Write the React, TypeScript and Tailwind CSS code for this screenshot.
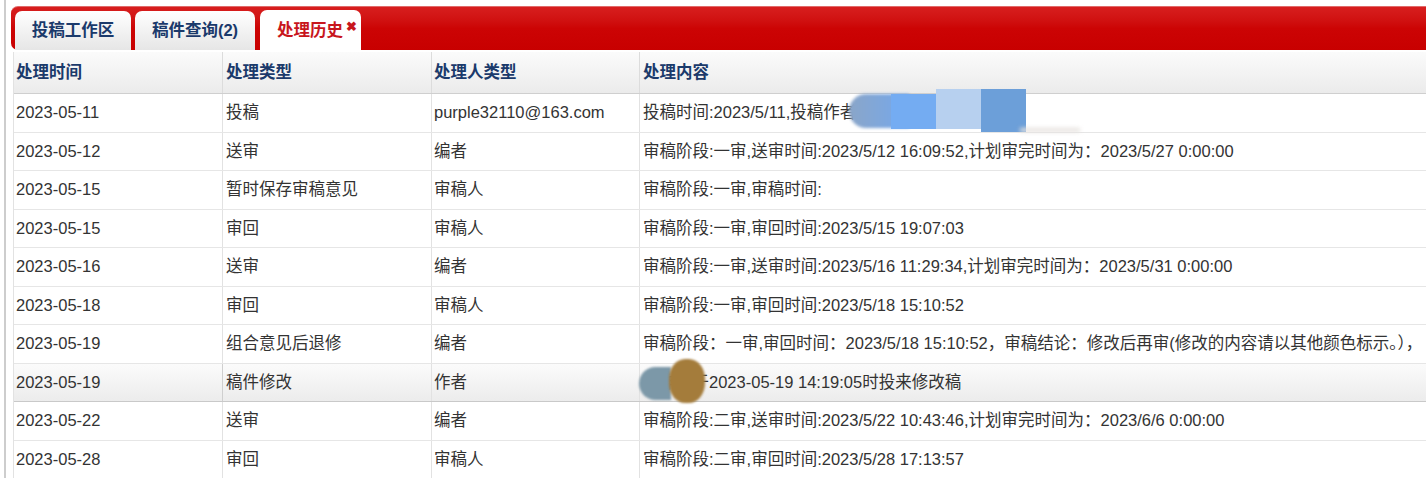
import React from "react";

const rows: [string, string, string, string][] = [
  ["2023-05-11", "投稿", "purple32110@163.com", "投稿时间:2023/5/11,投稿作者"],
  ["2023-05-12", "送审", "编者", "审稿阶段:一审,送审时间:2023/5/12 16:09:52,计划审完时间为：2023/5/27 0:00:00"],
  ["2023-05-15", "暂时保存审稿意见", "审稿人", "审稿阶段:一审,审稿时间:"],
  ["2023-05-15", "审回", "审稿人", "审稿阶段:一审,审回时间:2023/5/15 19:07:03"],
  ["2023-05-16", "送审", "编者", "审稿阶段:一审,送审时间:2023/5/16 11:29:34,计划审完时间为：2023/5/31 0:00:00"],
  ["2023-05-18", "审回", "审稿人", "审稿阶段:一审,审回时间:2023/5/18 15:10:52"],
  ["2023-05-19", "组合意见后退修", "编者", "审稿阶段：一审,审回时间：2023/5/18 15:10:52，审稿结论：修改后再审(修改的内容请以其他颜色标示。），"],
  ["2023-05-19", "稿件修改", "作者", "某作者于2023-05-19 14:19:05时投来修改稿"],
  ["2023-05-22", "送审", "编者", "审稿阶段:二审,送审时间:2023/5/22 10:43:46,计划审完时间为：2023/6/6 0:00:00"],
  ["2023-05-28", "审回", "审稿人", "审稿阶段:二审,审回时间:2023/5/28 17:13:57"],
];

const cols = "grid grid-cols-[208px_209px_208px_1fr]";

export default function App() {
  return (
    <div
      className="flex w-[1426px] h-[478px] overflow-hidden bg-white text-[16.5px] text-[#333]"
      style={{ fontFamily: '"Liberation Sans", "Noto Sans CJK SC", sans-serif' }}
    >
      <div className="w-[4px] shrink-0" />
      <div className="flex-1 min-w-0 border-l-2 border-[#cdcdcd] pt-[6px]">
        {/* tab bar */}
        <div className="ml-[5px] h-[44px] rounded-l-[7px] bg-gradient-to-b from-[#d71e1e] via-[#cc0404] to-[#c80000] border-t border-[#e06a6a] flex items-end pl-[4px] gap-[4px]">
          <div className="w-[116px] h-[39px] rounded-t-[7px] bg-gradient-to-b from-[#ffffff] to-[#e6e6e6] flex items-center justify-center font-bold text-[#1b3a6b]">
            投稿工作区
          </div>
          <div className="w-[120px] h-[39px] rounded-t-[7px] bg-gradient-to-b from-[#ffffff] to-[#e6e6e6] flex items-center justify-center font-bold text-[#1b3a6b]">
            稿件查询(2)
          </div>
          <div className="ml-[1px] w-[101px] h-[40px] rounded-t-[7px] bg-white flex items-center pl-[17px] font-bold text-[#c8161d]">
            <span>处理历史</span>
            <span className="self-start mt-[10px] ml-[3px] text-[13px] leading-none">✖</span>
          </div>
        </div>

        {/* table */}
        <div className="ml-[7px] mt-[2px] border-l border-[#e2e2e2]">
          <div className={`${cols} h-[42px] bg-gradient-to-b from-[#fbfbfb] to-[#ebebeb] border-b border-[#cfcfcf] font-bold text-[#1b3a6b]`}>
            <div className="flex items-center pl-[2px]">处理时间</div>
            <div className="flex items-center pl-[3px] border-l border-[#dcdcdc]">处理类型</div>
            <div className="flex items-center pl-[2px] border-l border-[#dcdcdc]">处理人类型</div>
            <div className="flex items-center pl-[3px] border-l border-[#dcdcdc]">处理内容</div>
          </div>
          {rows.map((r, i) => {
            const hl = i === 7;
            return (
              <div
                key={i}
                className={`${cols} h-[38.5px] border-b ${
                  hl
                    ? "bg-gradient-to-b from-[#fbfbfb] to-[#ececec] border-[#c9c9c9]"
                    : "bg-white border-[#e6e6e6]"
                }`}
              >
                <div className="flex items-center pl-[2px] whitespace-nowrap">{r[0]}</div>
                <div className={`flex items-center pl-[3px] border-l whitespace-nowrap ${hl ? "border-[#cfcfcf]" : "border-[#e2e2e2]"}`}>{r[1]}</div>
                <div className="flex items-center pl-[2px] border-l border-[#e2e2e2] whitespace-nowrap">{r[2]}</div>
                <div className="relative flex items-center pl-[3px] border-l border-[#e2e2e2] whitespace-nowrap">
                  {r[3]}
                  {i === 0 && (
                    <>
                      <div className="absolute left-[209px] top-[0px] w-[60px] h-[34px] rounded-l-full bg-gradient-to-r from-[#8aa5c8] to-[#74a8ec] blur-[1.5px]" />
                      <div className="absolute left-[251px] top-[0px] w-[46px] h-[35px] bg-[#74acf2]" />
                      <div className="absolute left-[296px] top-[-5px] w-[45px] h-[40px] bg-[#b7d0ef]" />
                      <div className="absolute left-[341px] top-[-5px] w-[45px] h-[43px] bg-[#6c9fd9]" />
                      <div className="absolute left-[380px] top-[34px] w-[60px] h-[4px] bg-[#e6e2de] blur-[2px]" />
                    </>
                  )}
                  {i === 7 && (
                    <>
                      <div className="absolute left-[-1px] top-[3px] w-[32px] h-[33px] rounded-l-full bg-[#7c98a8] blur-[1px]" />
                      <div className="absolute left-[29px] top-[-5px] w-[36px] h-[44px] rounded-[45%] bg-[#a47c3b] blur-[1px]" />
                    </>
                  )}
                </div>
              </div>
            );
          })}
        </div>
      </div>
    </div>
  );
}
